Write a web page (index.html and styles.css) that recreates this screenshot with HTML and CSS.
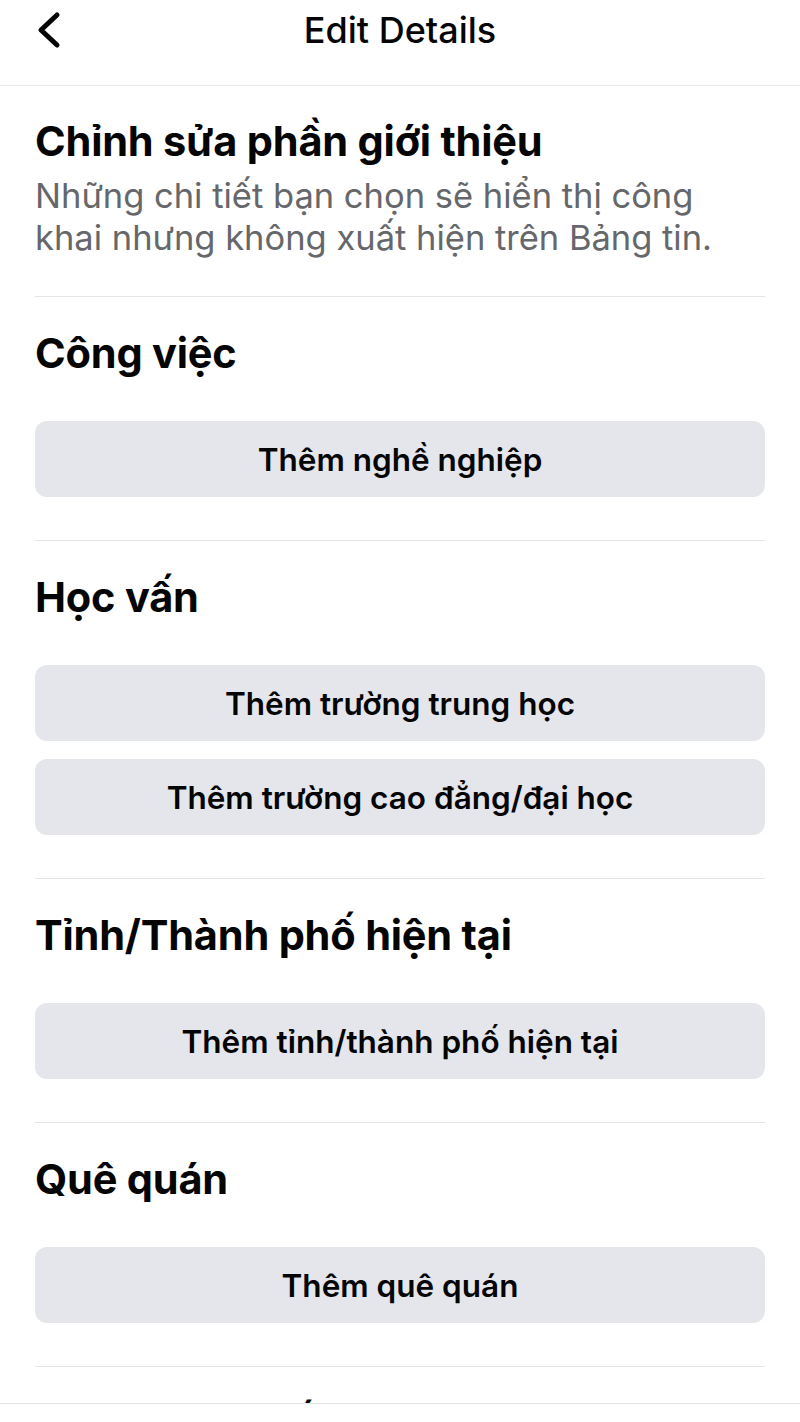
FILE: index.html
```html
<!DOCTYPE html>
<html lang="vi">
<head>
    <meta charset="UTF-8">
    <meta name="viewport" content="width=device-width, initial-scale=1.0">
    <title>Edit Details</title>
    <link rel="stylesheet" href="styles.css">
</head>
<body>
    <header class="nav">
        <button class="back" type="button" aria-label="Back">
            <svg width="32" height="40" viewBox="0 0 32 40">
                <polyline points="24,5 8,20 24,35" fill="none" stroke="#050505" stroke-width="5" stroke-linecap="round" stroke-linejoin="round"/>
            </svg>
        </button>
        <h1 class="nav-title">Edit Details</h1>
        <span></span>
    </header>

    <main class="content">
        <section class="intro">
            <h2>Chỉnh sửa phần giới thiệu</h2>
            <p>Những chi tiết bạn chọn sẽ hiển thị công khai nhưng không xuất hiện trên Bảng tin.</p>
        </section>

        <section class="group">
            <h2>Công việc</h2>
            <div class="actions">
                <button type="button">Thêm nghề nghiệp</button>
            </div>
        </section>

        <section class="group">
            <h2>Học vấn</h2>
            <div class="actions">
                <button type="button">Thêm trường trung học</button>
                <button type="button">Thêm trường cao đẳng/đại học</button>
            </div>
        </section>

        <section class="group">
            <h2>Tỉnh/Thành phố hiện tại</h2>
            <div class="actions">
                <button type="button">Thêm tỉnh/thành phố hiện tại</button>
            </div>
        </section>

        <section class="group">
            <h2>Quê quán</h2>
            <div class="actions">
                <button type="button">Thêm quê quán</button>
            </div>
        </section>

        <section class="group">
            <h2>Tình trạng mối quan hệ</h2>
            <div class="actions">
                <button type="button">Thêm tình trạng mối quan hệ</button>
            </div>
        </section>
    </main>

    <div class="bottom-bar"></div>
</body>
</html>
```

FILE: styles.css
```css
body {
    margin: 0;
    font-family: Inter, "Noto Sans", sans-serif;
    color: #050505;
    background: #fff;
}
.nav {
    display: grid;
    grid-template-columns: 1fr auto 1fr;
    align-items: start;
    height: 86px;
    border-bottom: 1px solid #e9e9eb;
    padding-top: 10px;
    box-sizing: border-box;
}
.back {
    justify-self: start;
    margin-left: 33px;
    padding: 0;
    border: none;
    background: none;
    height: 40px;
    display: flex;
    align-items: center;
}
.nav-title {
    margin: 0;
    font-size: 36px;
    font-weight: 500;
    line-height: 40px;
}
.content {
    margin: 0 35px;
}
.intro {
    padding: 32px 0 37px;
}
.intro h2,
.group h2 {
    margin: 0;
    font-size: 41.5px;
    font-weight: 700;
    line-height: 46px;
    letter-spacing: -0.2px;
}
.intro p {
    max-width: 700px;
    margin: 11px 0 0;
    font-size: 34.5px;
    line-height: 42px;
    color: #65676b;
}
.group {
    border-top: 1px solid #e4e4e6;
    padding: 33px 0 43px;
}
.actions {
    display: flex;
    flex-direction: column;
    gap: 18px;
    margin-top: 45px;
}
.actions button {
    height: 76px;
    border: none;
    border-radius: 12px;
    background: #e4e6eb;
    font-family: inherit;
    font-size: 31.5px;
    font-weight: 600;
    color: #050505;
}
.bottom-bar {
    position: fixed;
    left: 0;
    right: 0;
    bottom: 0;
    height: 18px;
    background: #fff;
    border-top: 1px solid #e3e3e5;
}
```
